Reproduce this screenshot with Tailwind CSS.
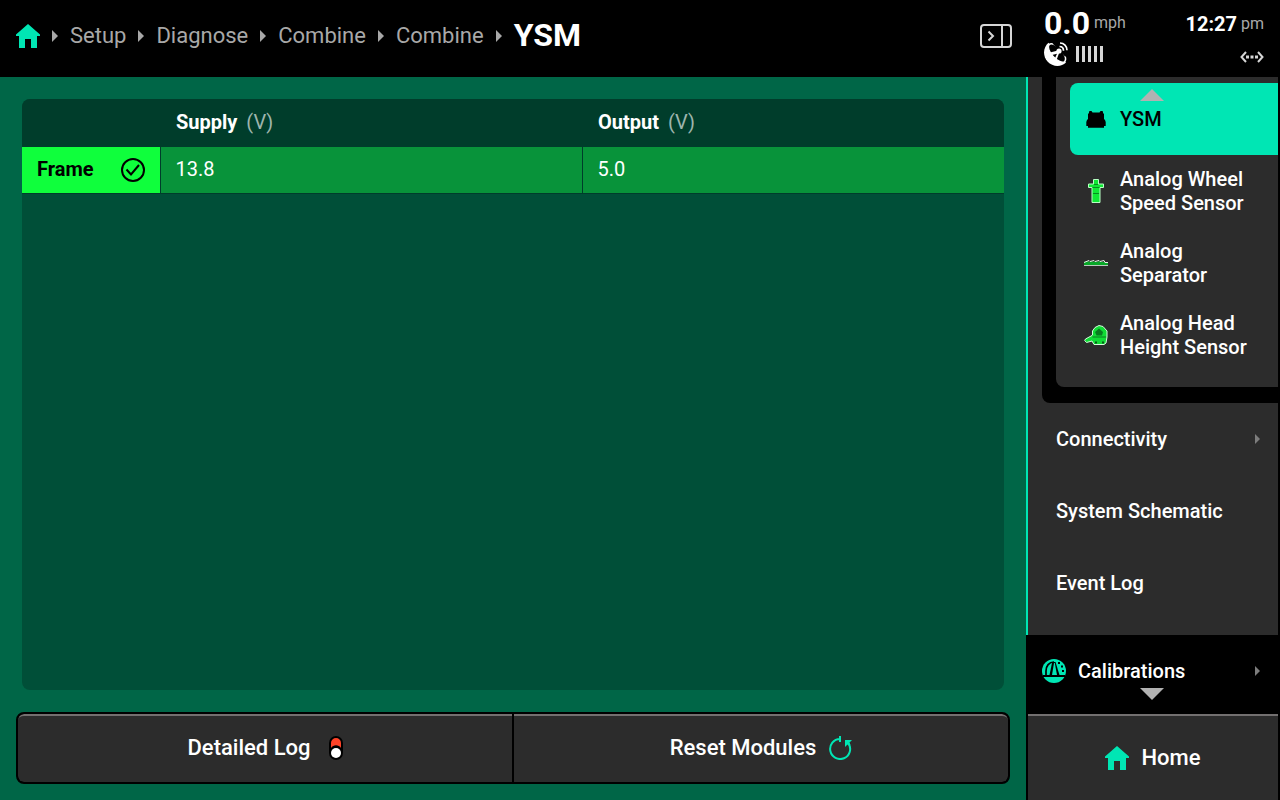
<!DOCTYPE html>
<html lang="en">
<head>
    <meta charset="UTF-8">
    <meta name="viewport" content="width=device-width, initial-scale=1.0">
    <title>YSM - Combine Diagnose</title>
    <script src="https://cdn.jsdelivr.net/npm/@tailwindcss/browser@4"></script>
</head>
<body class="bg-black text-white font-['Roboto',sans-serif] h-screen flex flex-col overflow-hidden">
    <header class="h-[77px] shrink-0 flex">
        <nav class="flex-1 flex items-center h-[72px] pl-4 text-[22px] text-[#a8a8a8]" aria-label="Breadcrumb">
            <a href="#" aria-label="Home" class="mr-3">
                <svg class="w-6 h-6" viewBox="0 0 24 24" fill="#00e6b4"><path d="M12 0L24 10.500V12H21V24H15V15H9V24H3V12H0V10.500Z"/></svg>
            </a>
            <svg class="w-1.5 h-3 mr-3" viewBox="0 0 6 12" fill="#a8a8a8"><path d="M0 0L6 6L0 12Z"/></svg>
            <a href="#" class="mr-3 pb-0.5">Setup</a>
            <svg class="w-1.5 h-3 mr-3" viewBox="0 0 6 12" fill="#a8a8a8"><path d="M0 0L6 6L0 12Z"/></svg>
            <a href="#" class="mr-3 pb-0.5">Diagnose</a>
            <svg class="w-1.5 h-3 mr-3" viewBox="0 0 6 12" fill="#a8a8a8"><path d="M0 0L6 6L0 12Z"/></svg>
            <a href="#" class="mr-3 pb-0.5">Combine</a>
            <svg class="w-1.5 h-3 mr-3" viewBox="0 0 6 12" fill="#a8a8a8"><path d="M0 0L6 6L0 12Z"/></svg>
            <a href="#" class="mr-3 pb-0.5">Combine</a>
            <svg class="w-1.5 h-3 mr-3" viewBox="0 0 6 12" fill="#a8a8a8"><path d="M0 0L6 6L0 12Z"/></svg>
            <h1 class="text-[32px] font-bold text-white pb-0.5">YSM</h1>
            <button class="ml-auto mr-[14px]" aria-label="Collapse sidebar">
                <svg class="w-8 h-6" viewBox="0 0 32 24" fill="none" stroke="#d6d6d6" stroke-width="2">
                    <rect x="1" y="1" width="30" height="22" rx="3"/>
                    <path d="M22 1V23M8.500 7.500L13 12L8.500 16.500"/>
                </svg>
            </button>
        </nav>
        <!-- status block -->
        <div class="w-[254px] flex justify-between pl-[18px] pr-4 pt-[7px]">
            <div>
                <div class="flex items-center gap-1 h-8">
                    <span class="text-[32px]/8 font-bold">0.0</span>
                    <span class="text-base/8 text-[#a8a8a8]">mph</span>
                </div>
                <div class="flex items-center gap-2 pt-[3px]">
                    <svg class="w-6 h-6" viewBox="0 0 24 24">
                        <path fill="#fff" d="M4.500 .8C-1 5.500 -1.500 14 3.500 19.500C8.500 25 17 25.500 22 20.500Z"/>
                        <ellipse cx="13" cy="11" rx="11.500" ry="5.200" transform="rotate(48 13 11)" fill="#000" stroke="#fff" stroke-width="1.400"/>
                        <path fill="#000" d="M8 0H24V15.500L20.500 14L9.500 2.500Z"/>
                        <path fill="#fff" d="M6 10.500L14 8.500L15.500 10L12.500 18L10.800 16.500L13 11.800L8 13Z"/>
                        <circle cx="15" cy="9" r="2.600" fill="#fff"/>
                        <path fill="none" stroke="#fff" stroke-width="1.700" d="M15.500 4.500C18 4.500 19.500 6.200 19.500 8.700M16 1C20 1 23 4 23 8.300"/>
                    </svg>
                    <svg class="w-7 h-4" viewBox="0 0 28 16" fill="#d6d6d6">
                        <path d="M0 0h3v16H0zM6 0h3v16H6zM12 0h3v16h-3zM18 0h3v16h-3zM24 0h3v16h-3z"/>
                    </svg>
                </div>
            </div>
            <div class="flex flex-col items-end pt-px">
                <div class="flex items-center gap-1 h-8">
                    <span class="text-xl/8 font-bold">12:27</span>
                    <span class="text-base/8 text-[#a8a8a8]">pm</span>
                </div>
                <svg class="w-6 h-3 mt-[11px]" viewBox="0 0 24 12" fill="none" stroke="#d6d6d6" stroke-width="2">
                    <path d="M6 1L1.500 6L6 11M18 1L22.500 6L18 11"/>
                    <path fill="#d6d6d6" stroke="none" d="M6 4.500h3v3H6zM10.500 4.500h3v3h-3zM15 4.500h3v3h-3z"/>
                </svg>
            </div>
        </div>
    </header>

    <div class="flex-1 flex min-h-0">
        <main class="flex-1 min-w-0 flex flex-col bg-[#006647] px-4 pt-[22px] pb-4">
            <section class="flex-1 mx-1.5 rounded-lg overflow-hidden bg-[#004f38]">
                <table class="w-full table-fixed text-left text-xl">
                    <thead class="bg-[#003d2b]">
                        <tr class="h-12">
                            <th class="w-[138px]"></th>
                            <th class="px-4 pb-0.5 font-bold">Supply <span class="ml-1 font-normal text-[#9db5ad]">(V)</span></th>
                            <th class="px-4 pb-0.5 font-bold">Output <span class="ml-1 font-normal text-[#9db5ad]">(V)</span></th>
                        </tr>
                    </thead>
                    <tbody>
                        <tr class="h-[46px] border-b border-[#003d2b] bg-[#08933a]">
                            <th class="bg-[#0fff3c] border-r border-[#003d2b] px-[15px] text-black font-bold">
                                <div class="flex items-center justify-between"><span class="pb-0.5">Frame</span>
                                    <svg class="w-6 h-6" viewBox="0 0 24 24" fill="none" stroke="#000" stroke-width="2"><circle cx="12" cy="12" r="11"/><path d="M5.500 11.500L10 16.500L18 7"/></svg>
                                </div>
                            </th>
                            <td class="border-r border-[#003d2b] px-[15px] pb-0.5">13.8</td>
                            <td class="px-[15px] pb-0.5">5.0</td>
                        </tr>
                    </tbody>
                </table>
            </section>
            <div class="mt-[22px] h-[72px] shrink-0 flex gap-0.5 bg-black border-2 border-black rounded-lg overflow-hidden text-[22px] font-medium">
                <button class="flex-1 flex items-center justify-center gap-[18px] pb-0.5 bg-[#2c2c2c] border-t-2 border-[#737070] rounded-l-md"><span class="pb-0.5">Detailed Log</span>
                    <svg class="w-[14px] h-6" viewBox="0 0 14 24"><rect width="14" height="24" rx="7" fill="#000"/><path fill="#ff4328" d="M2 12V7a5 5 0 0 1 10 0v5a6 6 0 0 0-10 0Z"/><circle cx="7" cy="17" r="5" fill="#fff"/></svg>
                </button>
                <button class="flex-1 flex items-center justify-center gap-3 pb-0.5 bg-[#2c2c2c] border-t-2 border-[#737070] rounded-r-md"><span class="pb-0.5">Reset Modules</span>
                    <svg class="w-6 h-6" viewBox="0 0 24 24" fill="none" stroke="#00e6b4" stroke-width="2"><path d="M12 0V6M12 3A10 10 0 1 0 20.500 7.500"/><path fill="#00e6b4" stroke="none" d="M17 4H24L21.500 6.500L22.500 9L20.500 9.500L19.500 8.500L17 11Z"/></svg>
                </button>
            </div>
        </main>

        <aside class="w-[254px] shrink-0 pr-0.5 relative flex flex-col text-xl/6 font-medium">
            <div class="bg-[#2c2c2c] border-l-2 border-[#00e6b4] pb-4">
                <div class="bg-black ml-[14px] pl-[14px] pb-4 rounded-bl-lg">
                    <ul class="bg-[#2c2c2c] pl-[14px] pt-1.5 pb-4 rounded-bl-lg">
                        <li><a href="#" class="h-[72px] flex items-center gap-3 pl-[14px] rounded-l-lg bg-[#00e6b4] text-black">
                            <svg class="w-6 h-6" viewBox="0 0 24 24"><path d="M4 7L5 6V4.500L6 4H7.500L8.500 5.500H15.500L16.500 4H18L19 4.500V6L20 7V12L21 13L21.700 15V19H20V20.700H4V19H2.300V15L3 13L4 12Z"/></svg>
                            YSM</a></li>
                        <li><a href="#" class="h-[72px] flex items-center gap-3 pl-[14px]">
                            <svg class="w-6 h-6 shrink-0" viewBox="0 0 24 24" stroke="#b8ffc4" stroke-width="1"><path fill="#10e835" d="M9.500 .5H14.500V5H19.500V8.500H16V23.500H8V8.500H4.500V5H9.500Z"/><path stroke="#078d20" d="M10 5.500H14M8.500 8.500H15.500M9 14.500H15"/></svg>
                            Analog Wheel<br>Speed Sensor</a></li>
                        <li><a href="#" class="h-[72px] flex items-center gap-3 pl-[14px]">
                            <svg class="w-6 h-6 shrink-0" viewBox="0 0 24 24"><path fill="#08a728" d="M0 14V11L4 10L5 11L8 10L9 11L12 10L13 11L16 10L17 11L24 11V14Z"/><path fill="none" stroke="#e4f2e6" d="M0 11.500L5 9.500L6 10.500L10 9.500L11 10.500L15 9.500L16 10.500L20 9.500L21 11.500H24"/><path stroke="#b8c8bc" d="M0 14.500H24"/></svg>
                            Analog<br>Separator</a></li>
                        <li><a href="#" class="h-[72px] flex items-center gap-3 pl-[14px]">
                            <svg class="w-6 h-6 shrink-0" viewBox="0 0 24 24"><path fill="#10dc35" stroke="#d0ffd8" stroke-width="1" d="M8.500 12V8L11 4.500L15 2.500L19 3.500L23 8V14L22 20L20 21.500H10L8 18L2.500 19.500L.7 17.500L1.500 16L8 12.500Z"/><path fill="#087d20" d="M15 5.500L19 9L18 12.500H12.500L11 9ZM8.500 13.500H22V14.500H8.500Z"/><path fill="#065a17" d="M11 18.500h2v2h-2zM18 18.500h2v2h-2z"/></svg>
                            Analog Head<br>Height Sensor</a></li>
                    </ul>
                </div>
                <ul>
                    <li><a href="#" class="h-[72px] flex items-center justify-between pl-7 pr-[18px]">Connectivity
                        <svg class="w-[5px] h-2.5" viewBox="0 0 5 10" fill="#7d7d7d"><path d="M0 0L5 5L0 10Z"/></svg></a></li>
                    <li><a href="#" class="h-[72px] flex items-center pl-7">System Schematic</a></li>
                    <li><a href="#" class="h-[72px] flex items-center pl-7">Event Log</a></li>
                </ul>
            </div>
            <a href="#" class="h-[72px] flex items-center pl-4 pr-[18px] bg-black">
                <svg class="w-6 h-6 mr-3" viewBox="0 0 24 24"><circle cx="12" cy="12" r="12" fill="#00e6b4"/><path fill="#000" d="M1 16H23V18H1Z"/><path fill="none" stroke="#000" stroke-width="1.700" d="M4 16V12C4 7 7 3 12 3"/><path fill="#000" d="M7.500 16L10 4L11.500 3H13.500L17.500 16Z"/><path fill="#00e6b4" d="M10 16L12 4H12.800L15 16Z"/><path fill="#000" d="M16 3h2v2h-2zM19 6.500h2v2h-2zM20 11h2v2h-2z"/></svg>
                <span>Calibrations</span>
                <svg class="w-[5px] h-2.5 ml-auto" viewBox="0 0 5 10" fill="#7d7d7d"><path d="M0 0L5 5L0 10Z"/></svg>
            </a>
            <a href="#" class="mt-auto ml-0.5 h-[86px] flex items-center justify-center gap-3 bg-[#2c2c2c] border-t-2 border-[#737070] text-[22px]">
                <svg class="w-6 h-6" viewBox="0 0 24 24" fill="#00e6b4"><path d="M12 0L24 10.500V12H21V24H15V15H9V24H3V12H0V10.500Z"/></svg>
                Home
            </a>
            <!-- scroll arrows over the menu -->
            <button class="absolute top-3 left-[114px]" aria-label="Scroll up"><svg class="w-6 h-3" viewBox="0 0 24 12" fill="#b2b2b2"><path d="M12 0L24 12H0Z"/></svg></button>
            <button class="absolute bottom-[100px] left-[114px]" aria-label="Scroll down"><svg class="w-6 h-3" viewBox="0 0 24 12" fill="#b2b2b2"><path d="M0 0H24L12 12Z"/></svg></button>
        </aside>
    </div>
</body>
</html>
